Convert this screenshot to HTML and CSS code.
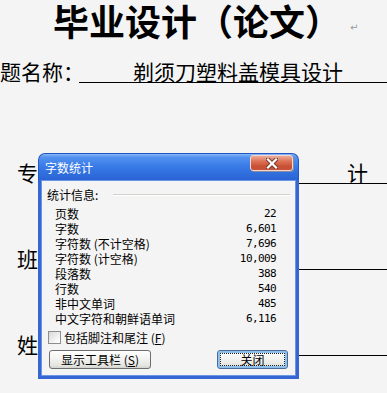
FILE: index.html
```html
<!DOCTYPE html>
<html lang="zh-CN">
<head>
<meta charset="utf-8">
<title>字数统计</title>
<link rel="stylesheet" href="styles.css">
</head>
<body>
<div class="doc">
  <div class="title">毕业设计（论文）<span class="ret">↵</span></div>
  <div class="row row-topic">
    <span class="label">课题名称：</span>
    <span class="field topic">剃须刀塑料盖模具设计</span>
  </div>
  <div class="row row-major">
    <span class="label indent">专业：</span>
    <span class="field spaced">机械设计</span>
  </div>
  <div class="row row-class">
    <span class="label indent">班级：</span>
    <span class="field"></span>
  </div>
  <div class="row row-name">
    <span class="label indent">姓名：</span>
    <span class="field"></span>
  </div>
</div>

<div class="dialog">
  <div class="titlebar">
    <span class="caption">字数统计</span>
    <span class="close">
      <svg width="12" height="11" viewBox="0 0 12 11">
        <path d="M2 1.5 L10 9.5 M10 1.5 L2 9.5" stroke="#7a3a2e" stroke-width="4.2" stroke-linecap="square" fill="none"/>
        <path d="M2 1.5 L10 9.5 M10 1.5 L2 9.5" stroke="#ffffff" stroke-width="2.2" stroke-linecap="square" fill="none"/>
      </svg>
    </span>
  </div>
  <div class="body">
    <div class="group-head"><span>统计信息:</span><span class="sep"></span></div>
    <div class="stats">
      <div class="stat"><span>页数</span><span class="num">22</span></div>
      <div class="stat"><span>字数</span><span class="num">6,601</span></div>
      <div class="stat"><span>字符数 (不计空格)</span><span class="num">7,696</span></div>
      <div class="stat"><span>字符数 (计空格)</span><span class="num">10,009</span></div>
      <div class="stat"><span>段落数</span><span class="num">388</span></div>
      <div class="stat"><span>行数</span><span class="num">540</span></div>
      <div class="stat"><span>非中文单词</span><span class="num">485</span></div>
      <div class="stat"><span>中文字符和朝鲜语单词</span><span class="num">6,116</span></div>
    </div>
    <div class="check"><span class="box"></span><span>包括脚注和尾注 (<u>F</u>)</span></div>
    <div class="buttons">
      <span class="btn btn-show">显示工具栏 (<u>S</u>)</span>
      <span class="btn btn-close"><span class="focus">关闭</span></span>
    </div>
  </div>
</div>
</body>
</html>
```

FILE: styles.css
```css
* { box-sizing: border-box; }
html, body { margin: 0; padding: 0; }
body {
  width: 387px;
  height: 393px;
  overflow: hidden;
  position: relative;
  background: #f4f4f4;
  color: #000;
  font-family: "Noto Sans CJK SC", sans-serif;
}

/* ---------- document behind ---------- */
.doc {
  width: 408px;
  margin-left: -21px;
  display: flex;
  flex-direction: column;
}
.title {
  padding-top: 2px;
  padding-left: 74px;
  height: 38px;
  font-size: 36px;
  line-height: 36px;
  font-weight: 700;
  white-space: nowrap;
  display: flex;
  align-items: flex-end;
}
.ret {
  font-family: "DejaVu Sans", sans-serif;
  font-weight: 400;
  font-size: 10px;
  line-height: 10px;
  color: #9a9a9a;
  margin-left: 9px;
  margin-bottom: 5px;
}
.row {
  display: flex;
  font-size: 21px;
  line-height: 21px;
  white-space: nowrap;
}
.row-topic { margin-top: 23px; }
.row-major { margin-top: 79px; }
.row-class, .row-name { margin-top: 64px; }
.label { flex: none; width: 100px; }
.label.indent { padding-left: 38px; }
.field {
  flex: 1;
  height: 22px;
  border-bottom: 1px solid #000;
}
.field.topic { padding-left: 54px; }
.field.spaced { padding-left: 49px; letter-spacing: 52px; }

/* ---------- dialog ---------- */
.dialog {
  position: absolute;
  left: 38px;
  top: 153px;
  width: 261px;
  height: 226px;
  display: flex;
  flex-direction: column;
  font-size: 12px;
  line-height: 15px;
}
.titlebar {
  flex: none;
  height: 27px;
  border-radius: 7px 7px 0 0;
  background: linear-gradient(#86b8f8 0%, #5592f0 12%, #3a7ce8 45%, #2e6cdc 80%, #2a63d3 100%);
  border: 1px solid #2456c4;
  border-bottom: none;
  display: flex;
  align-items: flex-start;
  justify-content: space-between;
  padding: 0 5px 0 6px;
}
.caption {
  color: #fff;
  margin-top: 6px;
}
.close {
  margin-top: 1px;
  width: 43px;
  height: 16px;
  border: 1px solid #f2d8d0;
  border-radius: 3px;
  background: linear-gradient(#ecab98 0%, #dc6f54 40%, #c94f33 75%, #c5543a 100%);
  box-shadow: 1px 1px 0 #8a8a9a;
  display: flex;
  align-items: center;
  justify-content: center;
}
.body {
  flex: 1;
  background: #f4f4f4;
  border: 3px solid #3566d4;
  border-top: none;
  box-shadow: inset 0 0 0 1px #6c95e4;
  padding: 7px 6px 6px 6px;
  display: flex;
  flex-direction: column;
}
.group-head {
  display: flex;
  align-items: center;
  gap: 15px;
  height: 15px;
}
.sep {
  flex: 1;
  height: 2px;
  border-top: 1px solid #d2d2cc;
  border-bottom: 1px solid #ffffff;
}
.stats {
  margin: 4px 14px 0 8px;
  display: flex;
  flex-direction: column;
}
.stat {
  display: flex;
  justify-content: space-between;
  height: 15px;
}
.num {
  font-family: "DejaVu Sans Mono", monospace;
  font-size: 11px;
  letter-spacing: -0.6px;
}
.check {
  margin-top: 4px;
  height: 15px;
  display: flex;
  align-items: center;
  gap: 3px;
  padding-left: 1px;
}
.box {
  width: 13px;
  height: 13px;
  border: 1px solid #8e8e8e;
  background: linear-gradient(135deg, #d8d8d8, #f6f6f6 70%, #ffffff);
}
.buttons {
  margin-top: 5px;
  padding: 0 2px;
  display: flex;
  justify-content: space-between;
}
.btn {
  height: 19px;
  border: 1px solid #6e6e6e;
  border-radius: 3px;
  background: linear-gradient(#ffffff 0%, #f3f3f1 45%, #e4e4e0 85%, #d2d2ce 100%);
  display: flex;
  align-items: center;
  justify-content: center;
}
.btn-show { width: 102px; }
.btn-close {
  width: 71px;
  padding: 2px;
  box-shadow: inset 0 0 0 2px #8fc0ea;
  border-color: #4a6a9a;
}
.focus {
  width: 100%;
  height: 100%;
  border: 1px dotted #222;
  display: flex;
  align-items: center;
  justify-content: center;
}
```
